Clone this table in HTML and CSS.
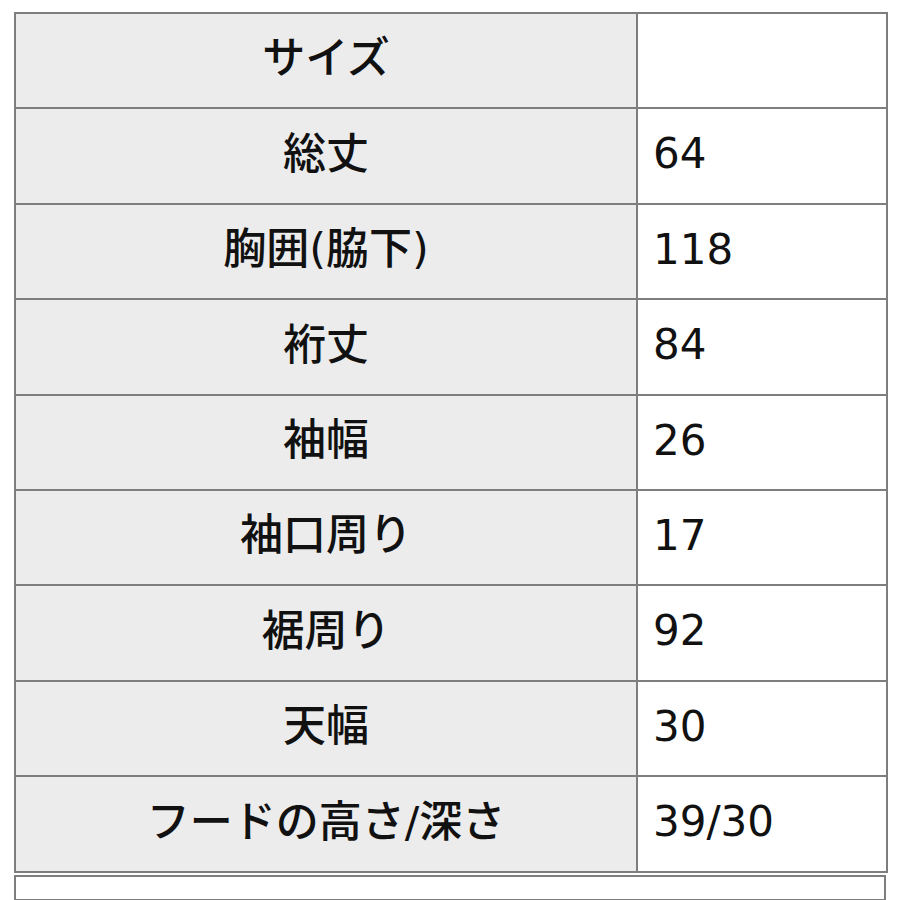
FILE: index.html
```html
<!DOCTYPE html>
<html lang="ja">
<head>
<meta charset="utf-8">
<title>サイズ表</title>
<link rel="stylesheet" href="styles.css">
</head>
<body>
<table class="size-table">
  <colgroup><col class="col-label"><col class="col-value"></colgroup>
  <tbody>
    <tr><th>サイズ</th><td></td></tr>
    <tr><th>総丈</th><td>64</td></tr>
    <tr><th>胸囲(脇下)</th><td>118</td></tr>
    <tr><th>裄丈</th><td>84</td></tr>
    <tr><th>袖幅</th><td>26</td></tr>
    <tr><th>袖口周り</th><td>17</td></tr>
    <tr><th>裾周り</th><td>92</td></tr>
    <tr><th>天幅</th><td>30</td></tr>
    <tr><th>フードの高さ/深さ</th><td>39/30</td></tr>
  </tbody>
</table>
<table class="note-table">
  <tbody>
    <tr><td></td></tr>
  </tbody>
</table>
</body>
</html>
```

FILE: styles.css
```css
html, body {
  margin: 0;
  padding: 0;
  background: #ffffff;
}
body {
  padding: 12px 0 0 14px;
  font-family: "DejaVu Sans", "Noto Sans CJK JP", sans-serif;
  color: #111111;
  overflow: hidden;
  height: 900px;
  box-sizing: border-box;
}
.size-table {
  border-collapse: collapse;
  table-layout: fixed;
  width: 872px;
}
.col-label { width: 622px; }
.col-value { width: 250px; }
.size-table tr {
  height: 95.4px;
}
.size-table th,
.size-table td {
  border: 2px solid #7e7e7e;
  padding: 0 0 3px 0;
  font-size: 43px;
  font-weight: 500;
  line-height: 1.2;
  vertical-align: middle;
}
.size-table th {
  background: #ececec;
  text-align: center;
}
.size-table td {
  background: #ffffff;
  text-align: left;
  padding-left: 15px;
  font-size: 42px;
  font-weight: 400;
}
.note-table {
  border-collapse: collapse;
  width: 872px;
  margin-top: 2px;
}
.note-table td {
  border: 2px solid #7e7e7e;
  height: 22px;
  padding: 0;
  background: #ffffff;
}
```
